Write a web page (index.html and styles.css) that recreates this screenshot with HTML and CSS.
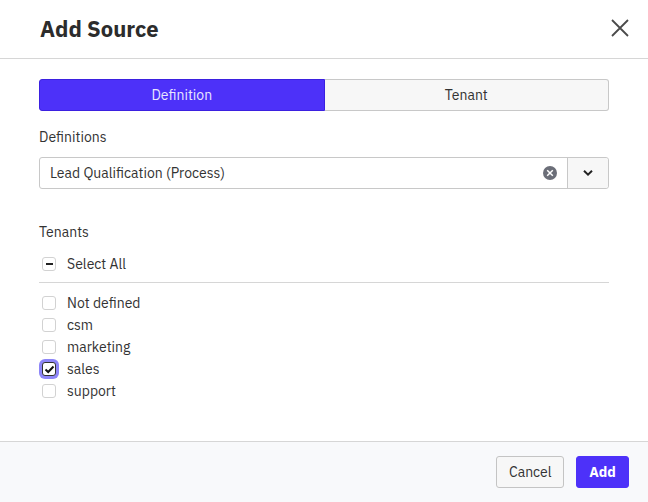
FILE: index.html
```html
<!DOCTYPE html>
<html>
<head>
<meta charset="utf-8">
<link rel="stylesheet" href="styles.css">
</head>
<body>
<div class="modal">
  <div class="header">
    <h1 class="title">Add Source</h1>
    <button class="close" aria-label="Close">
      <svg width="20" height="20" viewBox="0 0 20 20"><path d="M2 2L18 18M18 2L2 18" stroke="#4a4a4a" stroke-width="1.8" fill="none"/></svg>
    </button>
  </div>
  <div class="content">
    <div class="tabs">
      <div class="tab active">Definition</div>
      <div class="tab">Tenant</div>
    </div>
    <div class="label">Definitions</div>
    <div class="select">
      <div class="select-value">Lead Qualification (Process)</div>
      <div class="clear">
        <svg width="16" height="16" viewBox="0 0 16 16"><circle cx="8" cy="8" r="7" fill="#6b6e78"/><path d="M5.2 5.2L10.8 10.8M10.8 5.2L5.2 10.8" stroke="#fff" stroke-width="1.5"/></svg>
      </div>
      <div class="caret">
        <svg width="12" height="8" viewBox="0 0 12 8"><path d="M2 1.8L6 5.6L10 1.8" stroke="#222" stroke-width="2" fill="none"/></svg>
      </div>
    </div>
    <div class="label tenants-label">Tenants</div>
    <div class="check-row select-all">
      <span class="box"><span class="dash"></span></span>
      <span>Select All</span>
    </div>
    <div class="divider"></div>
    <div class="list">
      <div class="check-row"><span class="box"></span><span>Not defined</span></div>
      <div class="check-row"><span class="box"></span><span>csm</span></div>
      <div class="check-row"><span class="box"></span><span>marketing</span></div>
      <div class="check-row"><span class="box checked"><svg width="11" height="9" viewBox="0 0 11 9"><path d="M1.5 4.5L4.2 7L9.5 1.5" stroke="#111" stroke-width="2" fill="none"/></svg></span><span>sales</span></div>
      <div class="check-row"><span class="box"></span><span>support</span></div>
    </div>
  </div>
  <div class="footer">
    <button class="btn cancel">Cancel</button>
    <button class="btn primary">Add</button>
  </div>
</div>
</body>
</html>
```
FILE: styles.css
```css
* { box-sizing: border-box; }
html, body { margin: 0; padding: 0; }
body {
  width: 648px;
  height: 502px;
  font-family: "IBM Plex Sans", Roboto, "Noto Sans", sans-serif;
  color: #333;
  background: #fff;
  overflow: hidden;
}
.modal {
  display: flex;
  flex-direction: column;
  height: 502px;
}
.header {
  height: 59px;
  border-bottom: 1px solid #d6d6d6;
  display: flex;
  align-items: center;
  justify-content: space-between;
  padding: 0 18px 2px 40px;
}
.title {
  margin: 0;
  font-size: 22px;
  font-weight: 700;
  color: #2c2c2c;
}
.close {
  background: none;
  border: 0;
  padding: 0;
  width: 20px;
  height: 20px;
  display: flex;
}
.content {
  flex: 1;
  padding: 20px 39px 0 39px;
}
.tabs {
  display: flex;
  height: 32px;
  border-radius: 3px;
}
.tab {
  flex: 1;
  display: flex;
  align-items: center;
  justify-content: center;
  font-size: 14px;
  color: #333;
  background: #f7f7f7;
  border: 1px solid #c8c8c8;
  border-left: 0;
  border-radius: 0 3px 3px 0;
}
.tab.active {
  background: #4d31f9;
  border: 1px solid #3b20e0;
  color: #e8e6ff;
  border-radius: 3px 0 0 3px;
}
.label {
  font-size: 14px;
  color: #333;
  margin-top: 16px;
  line-height: 20px;
}
.select {
  margin-top: 10px;
  height: 32px;
  border: 1px solid #c8c8c8;
  border-radius: 3px;
  display: flex;
  align-items: center;
}
.select-value {
  flex: 1;
  padding-left: 10px;
  font-size: 14px;
  color: #333;
}
.clear {
  width: 28px;
  display: flex;
  align-items: center;
  justify-content: flex-start;
  padding-left: 3px;
}
.caret {
  width: 41px;
  height: 30px;
  border-left: 1px solid #c8c8c8;
  background: #f7f7f7;
  border-radius: 0 3px 3px 0;
  display: flex;
  align-items: center;
  justify-content: center;
}
.tenants-label {
  margin-top: 33px;
}
.check-row {
  display: flex;
  align-items: center;
  height: 22px;
  font-size: 14px;
  color: #333;
  gap: 11px;
  padding-left: 3px;
}
.select-all {
  margin-top: 11px;
}
.box {
  width: 14px;
  height: 14px;
  border: 1px solid #d2d2d2;
  border-radius: 3px;
  background: #fff;
  display: flex;
  align-items: center;
  justify-content: center;
  flex: none;
}
.dash {
  width: 7px;
  height: 2px;
  background: #222;
}
.box.checked {
  border: 1px solid #333;
  box-shadow: 0 0 0 3px #8d85f8;
}
.divider {
  height: 1px;
  background: #d6d6d6;
  margin-top: 7px;
  margin-bottom: 9px;
}
.footer {
  height: 61px;
  border-top: 1px solid #d6d6d6;
  background: #f8f9fb;
  display: flex;
  align-items: center;
  justify-content: flex-end;
  gap: 12px;
  padding-right: 19px;
}
.btn {
  height: 32px;
  font-family: inherit;
  font-size: 14px;
  border-radius: 3px;
  padding: 0 12px;
}
.cancel {
  background: #f7f7f7;
  border: 1px solid #c4c4c4;
  color: #333;
  width: 68px;
}
.primary {
  background: #4d31f9;
  border: 1px solid #4d31f9;
  color: #fff;
  font-weight: 700;
  width: 53px;
}
```
